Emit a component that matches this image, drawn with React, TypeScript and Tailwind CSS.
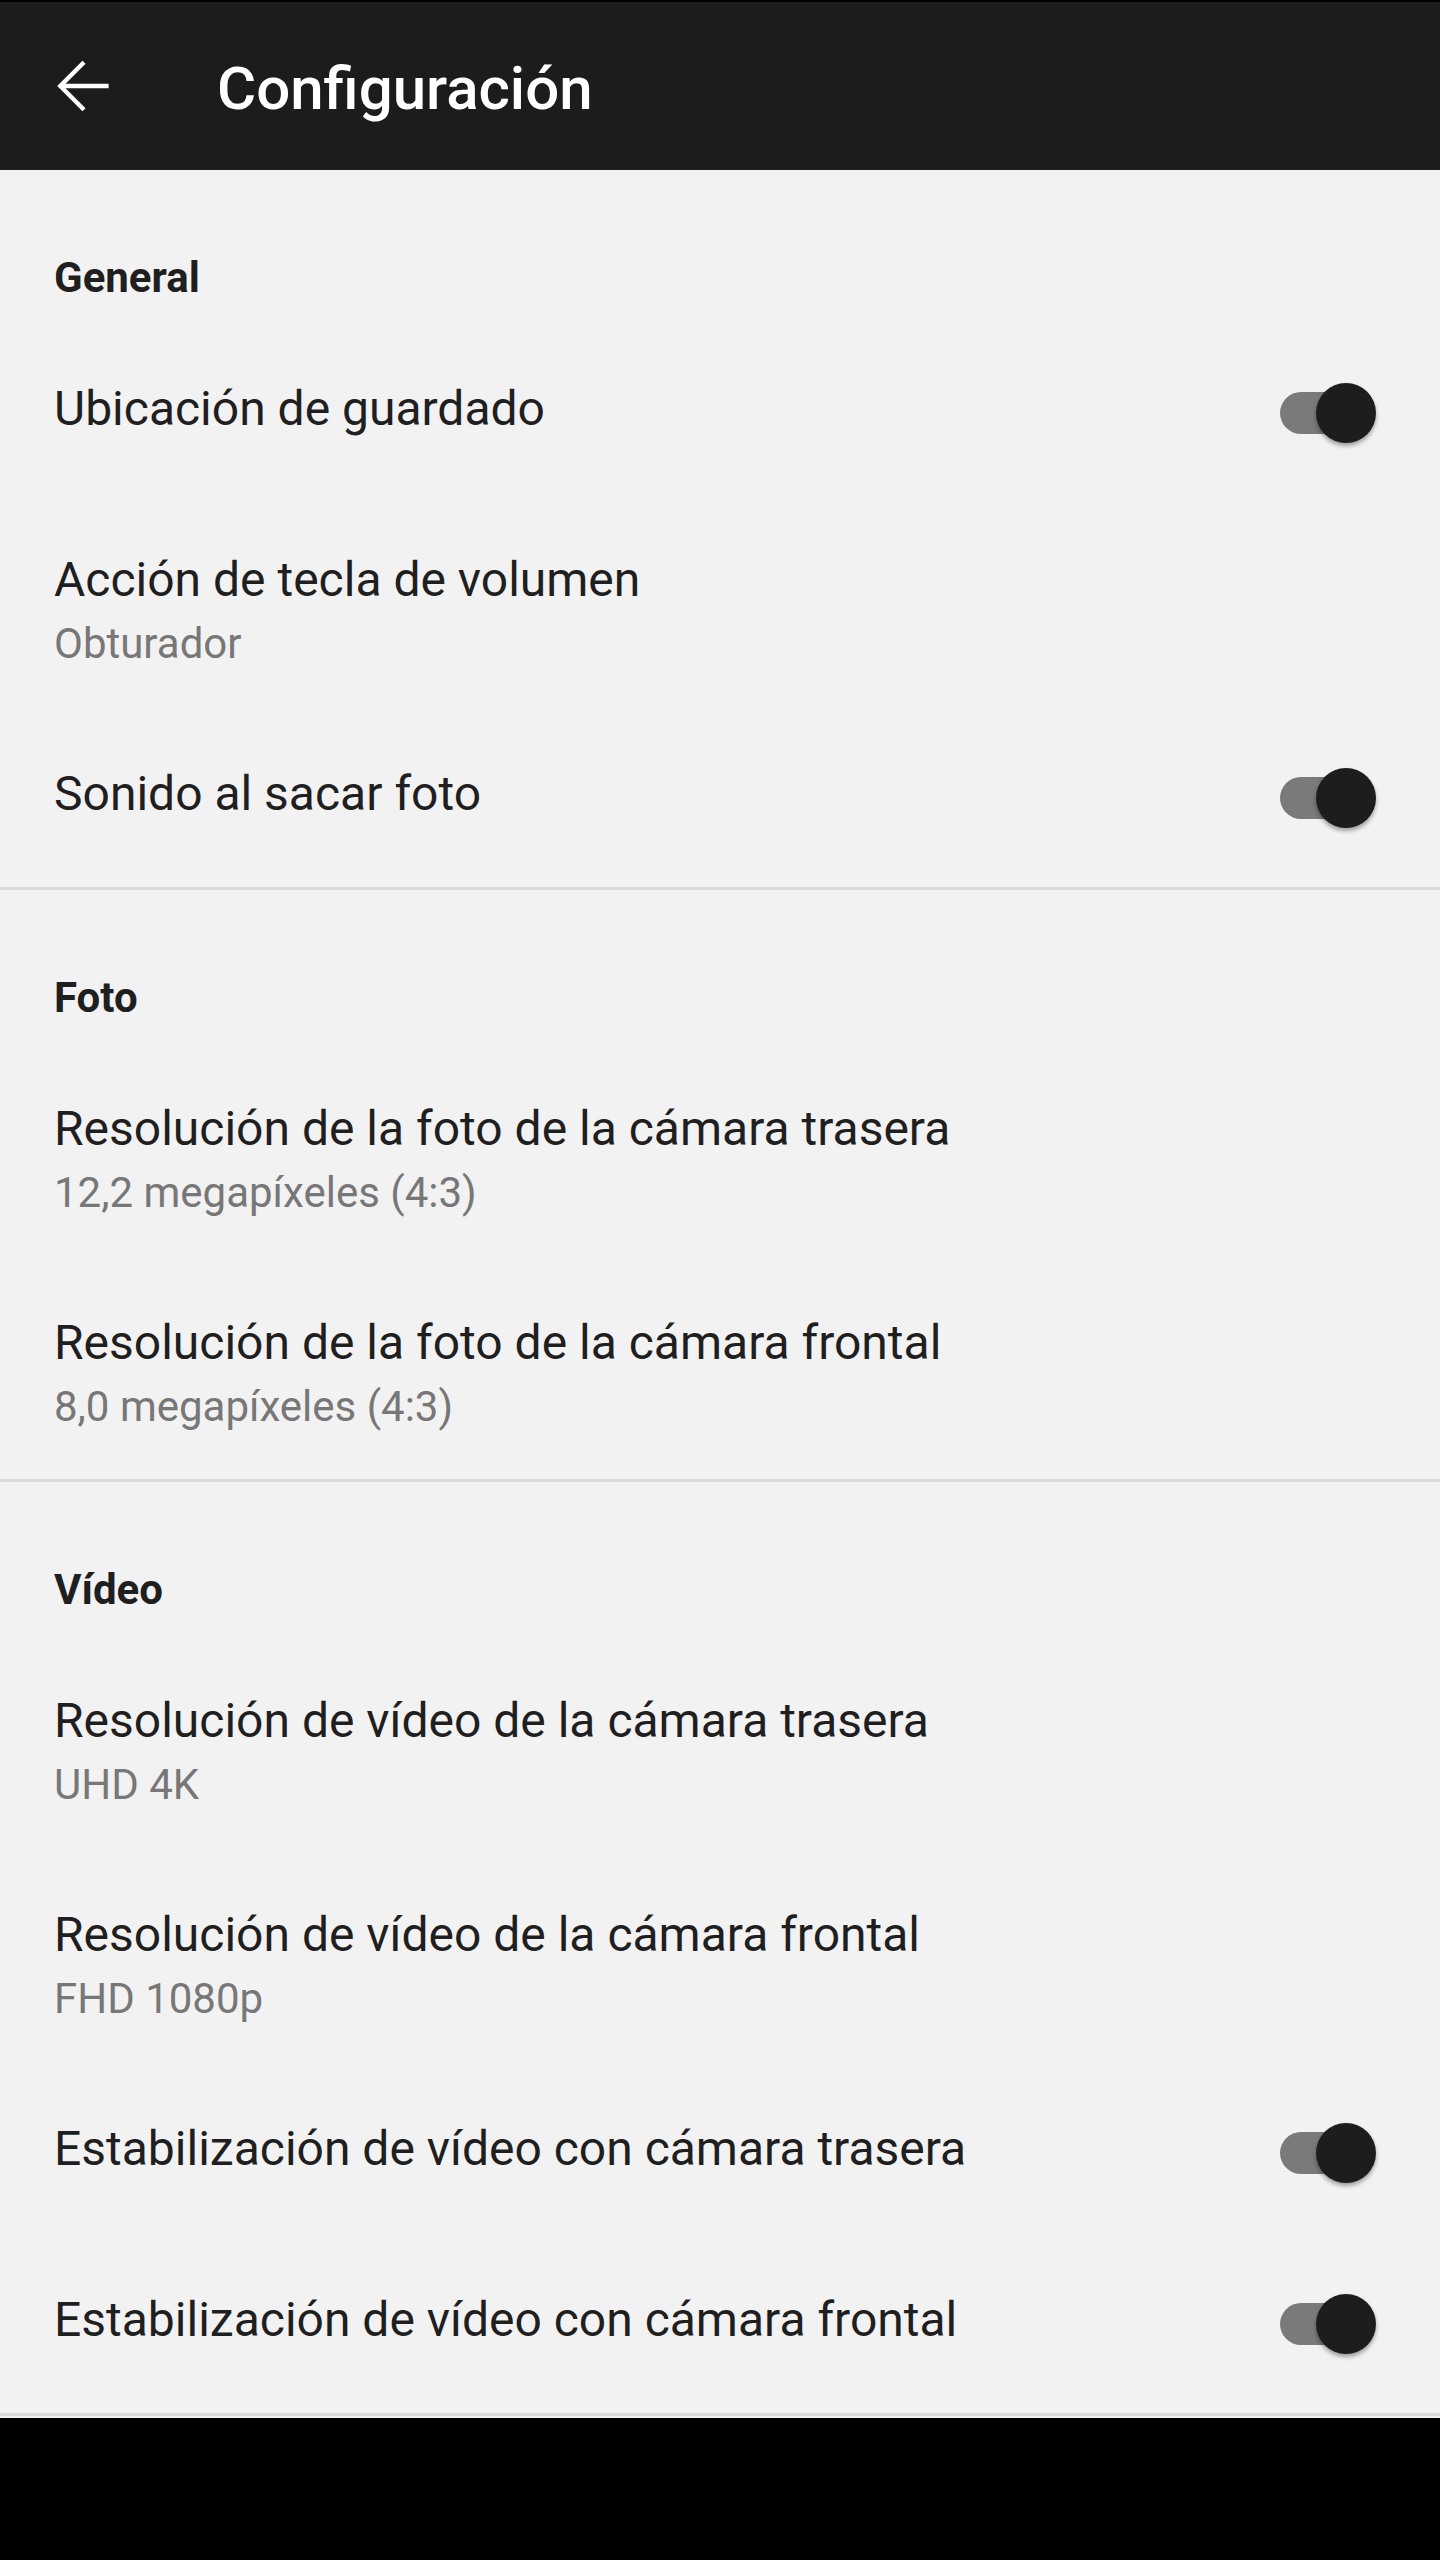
import React from "react";

type Item = {
  title: string;
  summary?: string;
  toggle?: boolean;
};

type Section = {
  name: string;
  items: Item[];
};

const sections: Section[] = [
  {
    name: "General",
    items: [
      { title: "Ubicación de guardado", toggle: true },
      { title: "Acción de tecla de volumen", summary: "Obturador" },
      { title: "Sonido al sacar foto", toggle: true },
    ],
  },
  {
    name: "Foto",
    items: [
      { title: "Resolución de la foto de la cámara trasera", summary: "12,2 megapíxeles (4:3)" },
      { title: "Resolución de la foto de la cámara frontal", summary: "8,0 megapíxeles (4:3)" },
    ],
  },
  {
    name: "Vídeo",
    items: [
      { title: "Resolución de vídeo de la cámara trasera", summary: "UHD 4K" },
      { title: "Resolución de vídeo de la cámara frontal", summary: "FHD 1080p" },
      { title: "Estabilización de vídeo con cámara trasera", toggle: true },
      { title: "Estabilización de vídeo con cámara frontal", toggle: true },
    ],
  },
];

// switch sits in a box the height of the title line so rows keep their height
function Toggle() {
  return (
    <div className="relative w-[102px] h-[64px] shrink-0">
      <div className="absolute left-0 top-[15px] h-[42px] w-[92px] rounded-full bg-[#7a7a7a]" />
      <div className="absolute right-[6px] top-[6px] h-[60px] w-[60px] rounded-full bg-[#1d1d1d] shadow-[0_3px_4px_rgba(0,0,0,0.35)]" />
    </div>
  );
}

function Row({ item }: { item: Item }) {
  return (
    <div
      className={
        item.summary
          ? "flex items-start pl-[54px] pr-[58px] pt-[46px] pb-[44px]"
          : "flex items-start pl-[54px] pr-[58px] pt-[46px] pb-[61px]"
      }
    >
      <div className="flex-1 flex flex-col">
        <div className="text-[48px] leading-[64px] text-[#1f1f1f]">{item.title}</div>
        {item.summary && (
          <div className="mt-[4px] text-[42px] leading-[56px] text-[#777777]">{item.summary}</div>
        )}
      </div>
      {item.toggle && <Toggle />}
    </div>
  );
}

export default function App() {
  return (
    <div className="w-[1440px] h-[2560px] flex flex-col bg-[#f2f2f2] font-['Roboto',_'Noto_Sans',_sans-serif]">
      <header className="h-[170px] shrink-0 border-t-2 border-black bg-[#1c1c1c] flex items-center pl-[48px]">
        <svg width="72" height="72" viewBox="0 0 24 24" fill="none" stroke="#ffffff" strokeWidth="1.45">
          <path d="M20.2 12H4.3" />
          <path d="M12 4.1 4.1 12 12 19.9" strokeLinejoin="miter" />
        </svg>
        <h1 className="ml-[97px] pt-[5px] text-[60px] leading-[80px] font-medium text-white">Configuración</h1>
      </header>

      <main className="flex flex-col">
        {sections.map((s) => (
          <section key={s.name} className="flex flex-col border-b-[3px] border-[#dadada]">
            <div className="pl-[54px] pt-[80px] pb-[25px] text-[42px] leading-[56px] font-bold text-[#1f1f1f]">
              {s.name}
            </div>
            {s.items.map((it) => (
              <Row key={it.title} item={it} />
            ))}
          </section>
        ))}
      </main>

      <div className="mt-[2px] flex-1 bg-black" />
    </div>
  );
}
